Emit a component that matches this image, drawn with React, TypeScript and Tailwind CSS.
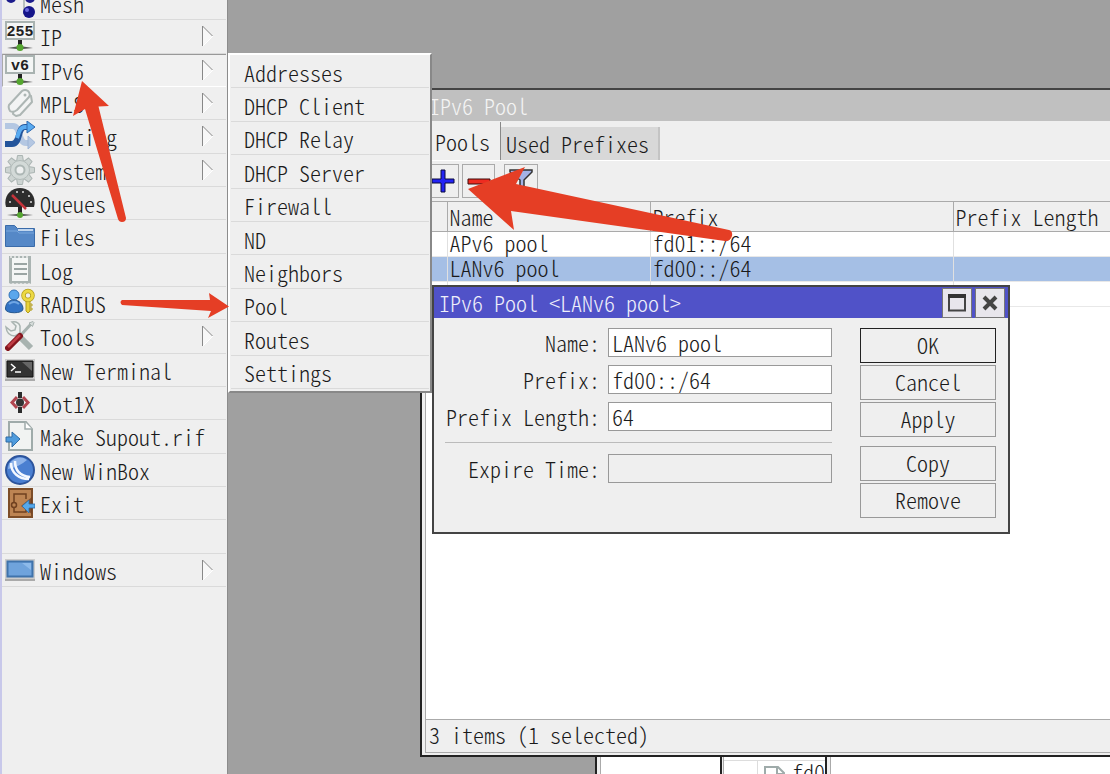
import React, { useState } from 'react';

interface MenuItem {
  label: string;
  icon?: React.ReactNode;
  sub?: boolean;
}

const Icon = ({ children }: { children: React.ReactNode }) => (
  <svg viewBox="0 0 30 30" className="w-[30px] h-[30px] shrink-0" aria-hidden="true">
    {children}
  </svg>
);

const NetSign = ({ text }: { text: string }) => (
  <Icon>
    <path d="M15 18v6" stroke="#222" strokeWidth="4" />
    <path d="M2 27l10-1.5h6l10 1.5-10 1h-6z" fill="#555" />
    <rect x="1" y="1" width="28" height="17" fill="#f4f6f5" stroke="#a9b3b1" strokeWidth="2" />
    <text x="15" y="15" textAnchor="middle" fontSize="15" fontWeight="bold" fontFamily="'Liberation Mono', monospace" fill="#222">
      {text}
    </text>
    <circle cx="15" cy="26.500" r="3.500" fill="#55a630" />
  </Icon>
);

const MeshIcon = (
  <Icon>
    <path d="M6 9h13v16h4M19 9h6" fill="none" stroke="#b8c0be" strokeWidth="2" />
    <circle cx="6" cy="10" r="5" fill="#1c1c8c" />
    <circle cx="25" cy="10" r="5" fill="#1c1c8c" />
    <circle cx="24" cy="24" r="6" fill="#15158a" />
    <circle cx="22" cy="22" r="2" fill="#6a6ae0" />
  </Icon>
);

const MplsIcon = (
  <Icon>
    <g fill="#f3f4f4" stroke="#adb6b4" strokeWidth="2" strokeLinejoin="round">
      <path d="M9 20l12-14 5 2 1 6-12 13-4 1-3-2z" />
      <path d="M4 17L17 3q3-2 6 0 3 3 1 6L12 22q-4 3-7 1-2-3-1-6z" />
    </g>
    <circle cx="20" cy="7" r="1.500" fill="#adb6b4" />
  </Icon>
);

const RoutingIcon = (
  <Icon>
    <path d="M0 5h8c8 0 5 17 13 17h2" fill="none" stroke="#b4c7e2" strokeWidth="6" />
    <path d="M23 15v13l7-6.500z" fill="#b4c7e2" stroke="#9db4d6" />
    <path d="M0 23h7c9 0 5-17 13-17h4" fill="none" stroke="#24559b" strokeWidth="6" />
    <path d="M12 17c2-6 3-11 8-11h4" fill="none" stroke="#58aaf0" strokeWidth="4" />
    <path d="M22 0v12l8-6z" fill="#58aaf0" stroke="#2d68b0" />
  </Icon>
);

const SystemIcon = (
  <Icon>
    {[0, 45, 90, 135, 180, 225, 270, 315].map(a => (
      <path key={a} d="M11.500 7l1-6.500h5l1 6.500z" transform={`rotate(${a} 15 15)`} fill="#cdd4d2" stroke="#aab4b2" />
    ))}
    <circle cx="15" cy="15" r="9.500" fill="#d3dad8" stroke="#b3bcba" />
    <circle cx="15" cy="15" r="4.500" fill="#eef0f0" stroke="#adb7b5" strokeWidth="2" />
  </Icon>
);

const QueuesIcon = (
  <Icon>
    <path d="M15 17v8" stroke="#222" strokeWidth="4" />
    <path d="M2 27l10-1h6l10 1-10 1h-6z" fill="#555" />
    <path d="M1 19C-2 8 6 0 15 0s17 8 14 19z" fill="#2d2d2d" />
    <g fill="#ddd">
      <circle cx="5" cy="14" r="1" /><circle cx="12" cy="4" r="1" /><circle cx="18" cy="4" r="1" />
      <circle cx="24" cy="8" r="1" /><circle cx="26" cy="14" r="1" />
    </g>
    <path d="M7 7l14 14" stroke="#c5343b" strokeWidth="2.500" />
    <circle cx="15" cy="27" r="3" fill="#55a630" />
  </Icon>
);

const FilesIcon = (
  <Icon>
    <path d="M0.500 4.500h9l3 3h17v18h-29z" fill="#5588c7" stroke="#3a6ba9" />
    <path d="M13 9h15" stroke="#e6f0fb" strokeWidth="1.500" />
    <path d="M1 10h11l2 2h15" fill="none" stroke="#79a6dc" />
  </Icon>
);

const LogIcon = (
  <Icon>
    <path d="M4 1h22v28l-2-1-2 1-2-1-2 1-2-1-2 1-2-1-2 1-2-1-2 1-2-1z" fill="#aab4b2" />
    <path d="M7 3h16v23H7z" fill="#f4f6f5" />
    <path d="M6 0v3M10 0v3M14 0v3M18 0v3M22 0v3" stroke="#eee" strokeWidth="1.500" />
    <path d="M9 9h13M9 14h13M9 19h13" stroke="#9aa5a3" strokeWidth="2" />
  </Icon>
);

const RadiusIcon = (
  <Icon>
    <circle cx="9" cy="7" r="5" fill="#5aa7ec" stroke="#3273b7" />
    <path d="M0.500 21c0-13 17.500-11 17.500 0 0 5-17.500 5-17.500 0z" fill="#3273c4" stroke="#25578f" />
    <path d="M4 16q5-4 10 0" fill="none" stroke="#6fa6e4" strokeWidth="2" />
    <path d="M21 12h4v11l-2 2-2-2z" fill="#e8d23a" stroke="#b39d1c" />
    <path d="M25 16h2v2h-2m0 2h2v2h-2" fill="none" stroke="#b39d1c" />
    <circle cx="23" cy="7.500" r="4.500" fill="none" stroke="#b39d1c" strokeWidth="4.500" />
    <circle cx="23" cy="7.500" r="4.500" fill="none" stroke="#ecd944" strokeWidth="3" />
  </Icon>
);

const ToolsIcon = (
  <Icon>
    <path d="M9 10l17 17" stroke="#a8b3b0" strokeWidth="6" />
    <path d="M1 6l5 4 4-1 1-4-4-4q6-1 8 4v7l-5 3q-8 0-9-9z" fill="#eef1f0" stroke="#a8b3b0" strokeWidth="1.500" />
    <path d="M27 2L15 15" stroke="#a8b3b0" strokeWidth="3" />
    <path d="M24 2l4-1.500 1 1-1.500 4z" fill="#d6dcda" stroke="#a8b3b0" />
    <path d="M15 15L3 27" stroke="#84151d" strokeWidth="6" strokeLinecap="round" />
    <path d="M15 14L3 26" stroke="#c03d45" strokeWidth="2.500" />
  </Icon>
);

const TerminalIcon = (
  <Icon>
    <path d="M0 4h30v22H0z" fill="#ccc" />
    <path d="M0 24h30v2H0z" fill="#aaa" />
    <path d="M2 6h26v16H2z" fill="#333" stroke="#111" />
    <path d="M17 7h10v9z" fill="#666" />
    <path d="M6 9l4 3.500L6 16M10 17h6" fill="none" stroke="#fff" strokeWidth="1.500" />
  </Icon>
);

const Dot1xIcon = (
  <Icon>
    <path d="M12 9l-5 5.500 5 5.500M18 9l5 5.500-5 5.500" fill="none" stroke="#b14650" strokeWidth="3" />
    <path d="M15 4v6M15 19v6" stroke="#2c2c2c" strokeWidth="4" />
    <circle cx="15" cy="14.500" r="4" fill="#333" />
  </Icon>
);

const SupoutIcon = (
  <Icon>
    <path d="M4 1h17l6 7v21H4z" fill="#f1f3f2" stroke="#9fabaa" strokeWidth="2" />
    <path d="M20 1v7h7" fill="#fff" stroke="#9fabaa" strokeWidth="1.500" />
    <path d="M1 16h6v-5l8 7-8 8v-5H1z" fill="#4f9bdc" stroke="#2e6ba5" />
  </Icon>
);

const WinboxIcon = (
  <Icon>
    <circle cx="15" cy="15" r="14" fill="#4a7fd1" stroke="#2c549c" strokeWidth="2" />
    <path d="M3 14a12 12 0 0 1 19-9q-8 7-19 9z" fill="#8fb4ea" />
    <path d="M6 8c0 10 8 16 18 16M10 6c0 10 5 15 15 16" fill="none" stroke="#f4f8ff" strokeWidth="2.500" />
  </Icon>
);

const ExitIcon = (
  <Icon>
    <path d="M4 1h23v28H4z" fill="#bd8453" stroke="#7d4d28" strokeWidth="2" />
    <path d="M9 14V6h12v5M9 20v4h12v-4" fill="none" stroke="#704020" strokeWidth="1.500" />
    <circle cx="9" cy="17" r="2.500" fill="#bd8453" stroke="#704020" strokeWidth="1.500" />
    <path d="M27 9v17l-11-8z" fill="#704020" opacity="0.800" />
    <path d="M17 18l7-6v4h6v4h-6v5z" fill="#55a9ec" stroke="#2e6ba5" strokeWidth="0.800" />
  </Icon>
);

const WindowsIcon = (
  <Icon>
    <path d="M0 4h30v22H0z" fill="#ccc" />
    <path d="M0 24h30v2H0z" fill="#aaa" />
    <path d="M2.500 6.500h25v15h-25z" fill="#6fa3dc" stroke="#3f73ab" strokeWidth="2" />
    <path d="M17 8h9v7z" fill="#8dbaea" />
  </Icon>
);

const MENU: MenuItem[] = [
  { label: 'Mesh', icon: MeshIcon },
  { label: 'IP', icon: <NetSign text="255" />, sub: true },
  { label: 'IPv6', icon: <NetSign text="v6" />, sub: true },
  { label: 'MPLS', icon: MplsIcon, sub: true },
  { label: 'Routing', icon: RoutingIcon, sub: true },
  { label: 'System', icon: SystemIcon, sub: true },
  { label: 'Queues', icon: QueuesIcon },
  { label: 'Files', icon: FilesIcon },
  { label: 'Log', icon: LogIcon },
  { label: 'RADIUS', icon: RadiusIcon },
  { label: 'Tools', icon: ToolsIcon, sub: true },
  { label: 'New Terminal', icon: TerminalIcon },
  { label: 'Dot1X', icon: Dot1xIcon },
  { label: 'Make Supout.rif', icon: SupoutIcon },
  { label: 'New WinBox', icon: WinboxIcon },
  { label: 'Exit', icon: ExitIcon },
  { label: '' },
  { label: 'Windows', icon: WindowsIcon, sub: true }
];

const SUBMENU = [
  'Addresses', 'DHCP Client', 'DHCP Relay', 'DHCP Server', 'Firewall',
  'ND', 'Neighbors', 'Pool', 'Routes', 'Settings'
];

const ROWS = [
  { name: 'APv6 pool', prefix: 'fd01::/64' },
  { name: 'LANv6 pool', prefix: 'fd00::/64' },
  { name: '', prefix: '' }
];

function Sidebar() {
  return (
    <nav className="w-[228px] shrink-0 overflow-hidden bg-[#efefef] border-l-2 border-l-[#c8c8ea] border-r border-r-[#8c8c8c]">
      <ul className="grid auto-rows-fr h-[600px] -mt-[13px] mr-px">
        {MENU.map(({ label, icon, sub }) => (
          <li
            key={label}
            className={`flex border-b ${
              label === 'IPv6' ? 'border-t border-l border-t-[#999] border-l-[#aaa] border-b-white bg-[#f1f1f1]' : 'border-b-[#dadada]'
            }`}
          >
            {label && (
              <button className={`flex flex-1 items-center gap-[5px] text-left ${label === 'IPv6' ? 'pl-[2px]' : 'pl-[3px]'}`}>
                {icon}
                <span className="flex-1">{label}</span>
                {sub && (
                  <svg viewBox="0 0 12 22" className="w-3 h-[22px] mr-3" aria-hidden="true">
                    <path d="M0.500 21V1l10 10z" fill="#f8f8f8" />
                    <path d="M0.500 21V1l10 10" fill="none" stroke="#888" />
                    <path d="M1 21l10-10" stroke="#fff" />
                  </svg>
                )}
              </button>
            )}
          </li>
        ))}
      </ul>
    </nav>
  );
}

function Submenu() {
  return (
    <div className="absolute left-0 top-[53px] w-[204px] bg-[#efefef] border-2 border-t-white border-l-white border-r-[#888] border-b-[#888] pb-[2px]">
      <ul className="grid auto-rows-fr h-[334px] px-px">
        {SUBMENU.map(item => (
          <li key={item} className="flex border-b border-[#dadada]">
            <button className="flex-1 pl-[13px] pt-px text-left">{item}</button>
          </li>
        ))}
      </ul>
    </div>
  );
}

function PoolWindow() {
  const [tab, setTab] = useState('Pools');

  return (
    <section className="absolute left-[192px] right-0 top-[88px] h-[669px] flex flex-col bg-[#efefef] border-t-2 border-t-[#444] border-l-2 border-l-[#222] border-b-2 border-b-[#222]">
      <h2 className="h-[31px] shrink-0 bg-[#c0c0c0] pl-[7px] pt-px text-[#f4f4f4]">IPv6 Pool</h2>
      <div className="flex-1 flex flex-col ml-[3px] mb-[2px] border-l border-b border-[#aaa]">
        <div className="flex items-end h-[40px] border-b border-white">
          <button onClick={() => setTab('Pools')} className="h-[38px] w-[75px] pl-[9px] text-left border-r border-[#888]">
            Pools
          </button>
          <button onClick={() => setTab('Used Prefixes')} className="h-[33px] w-[159px] pb-[2px] pl-[5px] text-left bg-[#d8d8d8] border-r-2 border-[#c4c4c4]">
            Used Prefixes
          </button>
        </div>
        <div className="flex items-center h-[40px] gap-[3px]" aria-label={tab}>
          <button aria-label="Add" className="w-[33px] h-[34px] flex items-center justify-center border border-[#aaa]">
            <svg viewBox="0 0 24 24" className="w-6 h-6">
              <path d="M10 1h4v9h9v4h-9v9h-4v-9H1v-4h9z" fill="#2323f5" stroke="#0a0a3c" />
            </svg>
          </button>
          <button aria-label="Remove" className="w-[33px] h-[34px] flex items-center justify-center border border-[#aaa]">
            <svg viewBox="0 0 24 24" className="w-6 h-6">
              <path d="M1 10h22v5H1z" fill="#ee2b20" stroke="#3c0a0a" />
            </svg>
          </button>
          <button aria-label="Filter" className="w-[34px] h-[34px] ml-[6px] flex items-center justify-center border border-[#aaa]">
            <svg viewBox="0 0 24 24" className="w-6 h-6">
              <path d="M1 1h22v2l-8 8v12h-4V11L1 3z" fill="#a4b3e6" stroke="#333" strokeWidth="1.500" />
            </svg>
          </button>
        </div>
        <div className="flex-1 bg-white">
          <table className="w-full table-fixed border-collapse text-left">
            <colgroup>
              <col className="w-[21px]" />
              <col className="w-[203px]" />
              <col className="w-[303px]" />
              <col />
            </colgroup>
            <thead>
              <tr className="h-[30px] bg-[#efefef] border-y border-[#aaa]">
                <th className="border-r border-[#aaa]" />
                <th className="p-0 pl-[2px] pb-[2px] font-light border-r border-[#aaa] leading-[24px]">Name</th>
                <th className="p-0 pl-[2px] pb-[2px] font-light border-r border-[#aaa] leading-[24px]">Prefix</th>
                <th className="p-0 pl-[2px] pb-[2px] font-light leading-[24px]">Prefix Length</th>
              </tr>
            </thead>
            <tbody>
              {ROWS.map(row => (
                <tr key={row.name} className={`h-[25px] border-b border-[#e8e8e8] ${row.name === 'LANv6 pool' ? 'bg-[#a5bfe5]' : ''}`}>
                  <td className="p-0 border-r border-[#e0e0e0]" />
                  <td className="p-0 pl-[2px] pb-1 border-r border-[#e0e0e0] leading-[20px]">{row.name}</td>
                  <td className="p-0 pl-[2px] pb-1 border-r border-[#e0e0e0] leading-[20px]">{row.prefix}</td>
                  <td className="p-0" />
                </tr>
              ))}
            </tbody>
          </table>
        </div>
        <p className="h-[33px] pl-[3px] border-t border-[#aaa]">3 items (1 selected)</p>
      </div>
    </section>
  );
}

const Field = ({ id, label, value, disabled }: { id: string; label: string; value: string; disabled?: boolean }) => (
  <div className="flex items-center gap-2">
    <label htmlFor={id} className="w-[155px] pb-[2px] text-right leading-[24px]">{label}:</label>
    <input
      id={id}
      defaultValue={value}
      disabled={disabled}
      className={`w-[224px] h-[29px] pl-[3px] pb-[2px] border border-[#999] rounded-none outline-none ${disabled ? 'bg-[#efefef]' : 'bg-white'}`}
    />
  </div>
);

const DialogButton = ({ primary, children }: { primary?: boolean; children: React.ReactNode }) => (
  <button className={`w-[136px] h-[35px] pb-1 border text-center ${primary ? 'border-[#222]' : 'border-[#999]'}`}>{children}</button>
);

function PoolDialog() {
  return (
    <section role="dialog" aria-label="IPv6 Pool" className="absolute left-[204px] top-[285px] w-[578px] h-[249px] bg-[#efefef] border-2 border-[#444]">
      <header className="flex items-center h-[31px] gap-[3px] pr-[3px] bg-[#5052c8] text-[#eeeefa]">
        <h2 className="flex-1 pl-[5px] pb-[2px]">IPv6 Pool &lt;LANv6 pool&gt;</h2>
        <button aria-label="Maximize" className="w-[30px] h-[30px] flex items-center justify-center bg-[#e8e6ec] border border-[#777]">
          <svg viewBox="0 0 20 20" className="w-5 h-5">
            <path d="M2 2.500h16v15H2z" fill="none" stroke="#444" strokeWidth="2" />
            <path d="M1 3h18" stroke="#333" strokeWidth="4" />
          </svg>
        </button>
        <button aria-label="Close" className="w-[30px] h-[30px] flex items-center justify-center bg-[#e8e6ec] border border-[#777]">
          <svg viewBox="0 0 20 20" className="w-5 h-5">
            <path d="M4 4l12 12M16 4L4 16" stroke="#444" strokeWidth="4" />
          </svg>
        </button>
      </header>
      <div className="flex justify-between pl-[11px] pr-[12px] pt-[10px]">
        <form className="flex flex-col gap-2">
          <Field id="name" label="Name" value="LANv6 pool" />
          <Field id="prefix" label="Prefix" value="fd00::/64" />
          <Field id="length" label="Prefix Length" value="64" />
          <hr className="my-[3px] border-[#bbb]" />
          <Field id="expire" label="Expire Time" value="" disabled />
        </form>
        <div className="flex flex-col gap-[2px]">
          <DialogButton primary>OK</DialogButton>
          <DialogButton>Cancel</DialogButton>
          <DialogButton>Apply</DialogButton>
          <div className="h-[5px]" />
          <DialogButton>Copy</DialogButton>
          <DialogButton>Remove</DialogButton>
        </div>
      </div>
    </section>
  );
}

// Windows that stick out under the pool list
function BackWindows() {
  return (
    <>
      <div className="absolute left-[367px] right-0 top-[740px] bottom-0 bg-[#efefef] border-l-2 border-[#222] pl-[3px]">
        <div className="h-full bg-white border-l border-[#aaa]" />
      </div>
      <div className="absolute left-[492px] w-[107px] top-[740px] bottom-0 bg-[#efefef] border-x-2 border-[#222] pl-px">
        <div className="h-full bg-white border-l border-[#aaa] flex pt-[20px] overflow-hidden">
          <div className="w-[34px] shrink-0 border-r border-t border-[#ddd]" />
          <div className="flex border-t border-[#ddd] pl-[5px] gap-[5px]">
            <svg viewBox="0 0 24 28" className="w-6 h-7 mt-1 shrink-0" aria-hidden="true">
              <path d="M2 2h13l6 6v20H2z" fill="#fff" stroke="#9fabaa" strokeWidth="2" />
              <path d="M14 2v7h7" fill="none" stroke="#9fabaa" strokeWidth="2" />
            </svg>
            <span className="leading-[20px]">fd0</span>
          </div>
        </div>
      </div>
      <div className="absolute left-[599px] w-[4px] top-[740px] bottom-0 bg-[#efefef] border-r border-[#aaa]" />
    </>
  );
}

const Arrows = () => (
  <svg viewBox="0 0 1110 774" className="absolute left-0 top-0 w-[1110px] h-[774px] pointer-events-none" fill="#e53e25" aria-hidden="true">
    <path d="M82 81L109 106L98.500 106.500L126 218Q126 222 122 222Q119 222 118 219L85 109L73 116Z" />
    <path d="M122 300L210 300L209 293L229 306.500L208 318L211 311L122 305Q119 302 122 300Z" />
    <path d="M468 189L525 167L516 184L729 230Q733 231 732 236Q730 242 725 241L511 211L514 230Z" />
  </svg>
);

export default function App() {
  return (
    <div className="relative flex h-screen overflow-hidden bg-[#a0a0a0] text-[#1a1a1a] text-[22px] leading-[28px] font-light [font-family:'Noto_Sans_CJK_SC',monospace] [font-feature-settings:'hwid','liga'_0]">
      <Sidebar />
      <main className="relative flex-1">
        <BackWindows />
        <PoolWindow />
        <PoolDialog />
        <Submenu />
      </main>
      <Arrows />
    </div>
  );
}
